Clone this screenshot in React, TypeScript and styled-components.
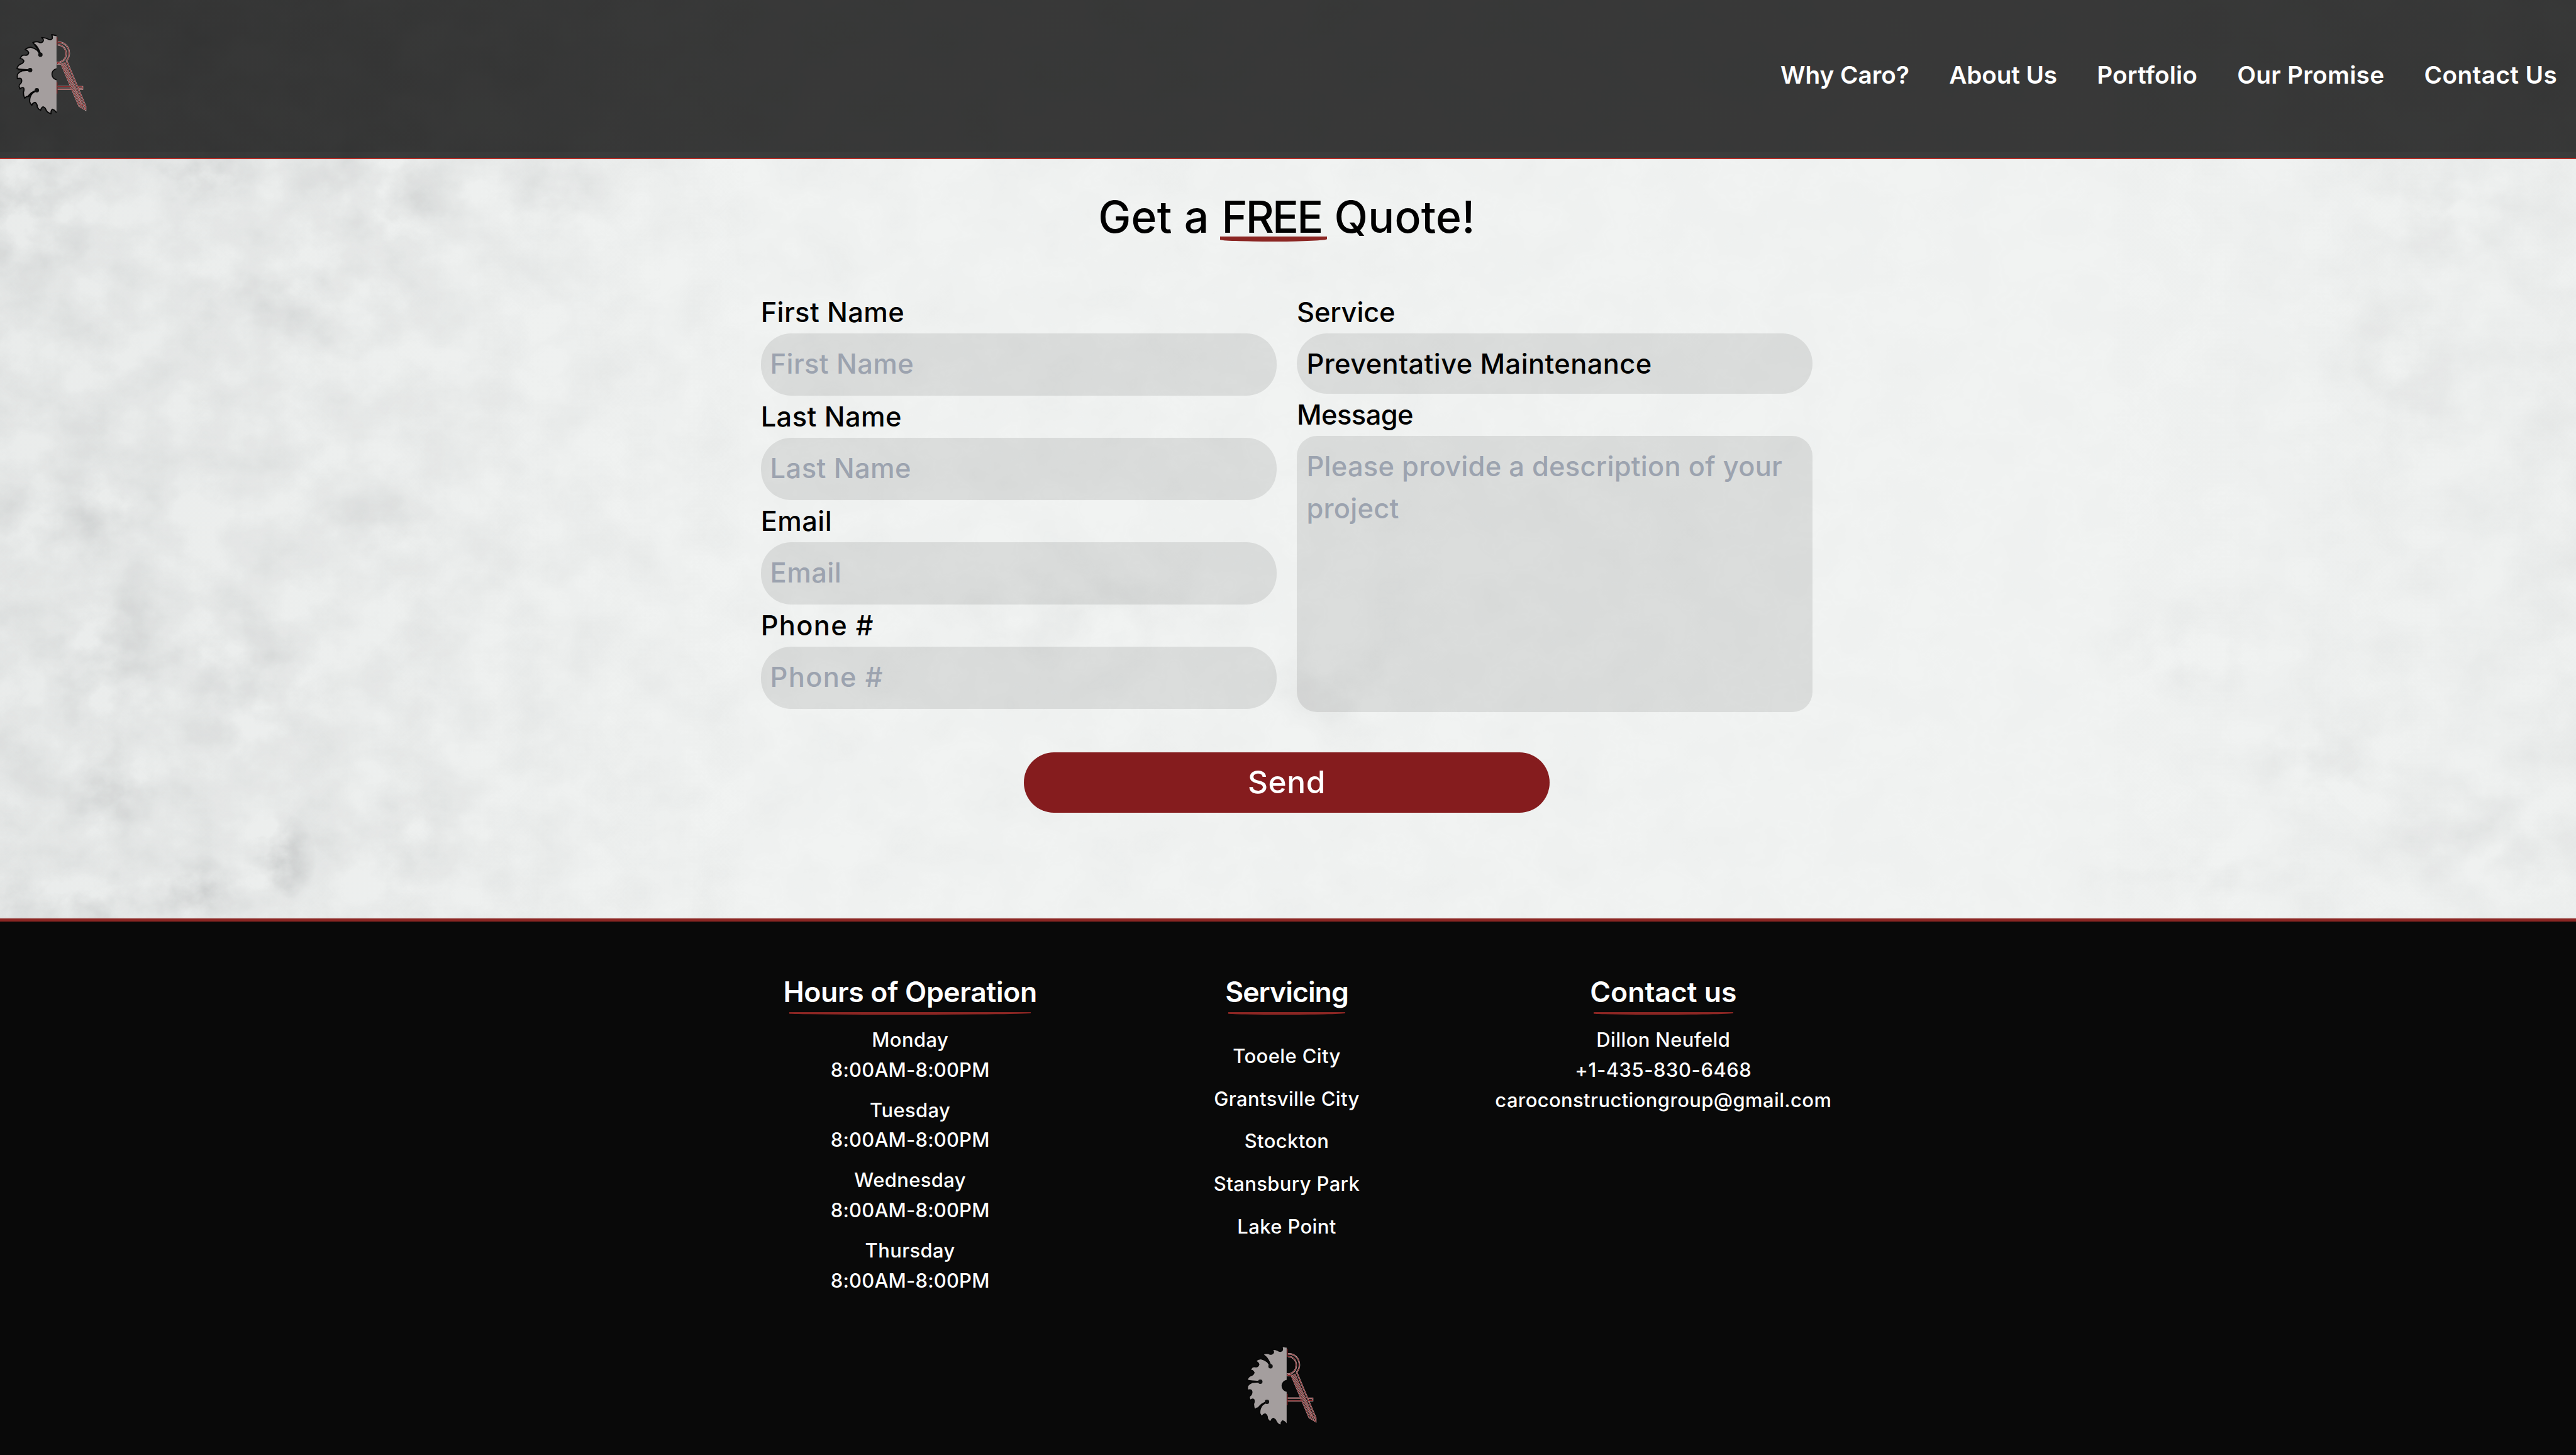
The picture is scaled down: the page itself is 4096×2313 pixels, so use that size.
import React from 'react';
import styled, { createGlobalStyle } from 'styled-components';

/* Design units: 32 units make one rem, and the root size sets the page scale. */
const u = (n: number) => `${n / 32}rem`;

const brick = '#8b2623';
const cream = '#f1f3f2';

const GlobalStyle = createGlobalStyle`
  *, *::before, *::after { box-sizing: border-box; }
  html { font-size: 31.9376px; }
  body {
    margin: 0;
    background: #090909;
    font-family: Inter, "Liberation Sans", sans-serif;
    font-weight: 500;
    overflow: hidden;
  }
  h1, h2, p, ul { margin: 0; padding: 0; }
`;

const Page = styled.div`
  position: relative;
  display: flex;
  flex-direction: column;
  height: ${u(2318)};
  background: ${cream};
  overflow: hidden;
`;

const TextureLayer = styled.svg`
  position: absolute;
  top: 0;
  left: 0;
  width: 100%;
  height: ${u(1469)};
`;

const Header = styled.header`
  position: relative;
  flex: none;
  display: flex;
  align-items: flex-start;
  justify-content: space-between;
  height: ${u(253)};
  padding: ${u(50)} ${u(30)} 0 ${u(20)};
  background: linear-gradient(rgba(0, 0, 0, 0.77) ${u(242)}, rgba(0, 0, 0, 0.752) ${u(242)});
  border-bottom: ${u(3)} solid #b02c26;
`;

const Nav = styled.nav`
  display: flex;
  gap: ${u(63.3)};
  padding-top: ${u(41)};
`;

const Spaced = styled.span<{ $track?: number }>`
  letter-spacing: ${p => p.$track ?? 0}em;
`;

const NavLink = styled(Spaced)`
  color: #fff;
  font-size: ${u(38.8)};
  line-height: ${u(56)};
  font-weight: 600;
  white-space: nowrap;
`;

const Main = styled.main`
  position: relative;
  flex: none;
  display: flex;
  flex-direction: column;
  align-items: center;
  height: ${u(1210)};
  padding: ${u(54)} ${u(4)} 0 0;
`;

const Title = styled.h1`
  display: flex;
  gap: ${u(20)};
  height: ${u(80)};
  color: #000;
  font-size: ${u(69.8)};
  line-height: ${u(80)};
  font-weight: 500;
  white-space: nowrap;
`;

const Emphasis = styled(Spaced)`
  position: relative;
  &::after {
    content: '';
    position: absolute;
    left: ${u(-2)};
    right: ${u(-9)};
    bottom: ${u(2)};
    height: ${u(8)};
    background: ${brick};
    border-bottom-left-radius: 50% ${u(3)};
    border-bottom-right-radius: 50% ${u(4)};
  }
`;

const Form = styled.form`
  display: flex;
  flex-direction: column;
  align-items: center;
  margin-top: ${u(76.6)};
`;

const Columns = styled.div`
  display: grid;
  grid-template-columns: ${u(822)} ${u(822)};
  gap: ${u(32)};
`;

const Column = styled.div`
  display: flex;
  flex-direction: column;
`;

const Label = styled.label<{ $track?: number }>`
  color: #000;
  font-size: ${u(43.5)};
  line-height: ${u(67.2)};
  letter-spacing: ${p => p.$track ?? 0.01}em;
`;

const controlStyles = `
  display: block;
  width: 100%;
  margin: 0;
  border: 0;
  outline: 0;
  appearance: none;
  background: rgba(0, 0, 0, 0.09);
  color: #000;
  font-family: inherit;
  font-weight: 500;
  font-size: ${u(43.5)};
  line-height: ${u(67.2)};
  &::placeholder { color: #9ca3af; opacity: 1; }
`;

const Input = styled.input<{ $track?: number }>`
  ${controlStyles}
  height: ${u(99.2)};
  padding: ${u(15)} ${u(15)} ${u(17)};
  border-radius: ${u(48)};
  letter-spacing: ${p => p.$track ?? 0.01}em;
`;

const Select = styled.select`
  ${controlStyles}
  height: ${u(96)};
  padding: ${u(15)} ${u(15.5)} ${u(13.8)};
  border-radius: ${u(48)};
  letter-spacing: 0.0096em;
`;

const TextArea = styled.textarea`
  ${controlStyles}
  height: ${u(440.5)};
  padding: ${u(15.5)} ${u(15.5)};
  border-radius: ${u(32)};
  letter-spacing: 0.0062em;
  resize: none;
  overflow: hidden;
`;

const SendButton = styled.button`
  width: ${u(838)};
  height: ${u(96)};
  margin-top: ${u(64)};
  padding: 0 0 ${u(3)};
  border: 0;
  border-radius: ${u(48)};
  background: #851c1e;
  color: #fff;
  font-family: inherit;
  font-weight: 500;
  font-size: ${u(49.7)};
  letter-spacing: 0.012em;
`;

const Footer = styled.footer`
  position: relative;
  flex: 1;
  display: flex;
  flex-direction: column;
  align-items: center;
  padding: ${u(82)} ${u(4)} 0 0;
  border-top: ${u(6)} solid ${brick};
  background: #090909;
  color: #fff;
`;

const FooterColumns = styled.div`
  display: grid;
  grid-template-columns: repeat(3, ${u(600)});
`;

const FooterColumn = styled.section`
  display: flex;
  flex-direction: column;
  align-items: center;
`;

const FooterHeading = styled.h2<{ $track?: number }>`
  display: flex;
  flex-direction: column;
  align-items: center;
  font-size: ${u(44.6)};
  line-height: ${u(62)};
  font-weight: 600;
  letter-spacing: ${p => p.$track ?? 0}em;
  white-space: nowrap;
  &::after {
    content: '';
    width: 95%;
    height: ${u(4)};
    background: ${brick};
    border-bottom-left-radius: 50% ${u(1.5)};
    border-bottom-right-radius: 50% ${u(2.5)};
  }
`;

const Entries = styled.div<{ $top: number; $gap: number }>`
  display: flex;
  flex-direction: column;
  align-items: center;
  padding-top: ${p => u(p.$top)};
  gap: ${p => u(p.$gap)};
`;

const Line = styled.p<{ $track?: number }>`
  font-size: ${u(31)};
  line-height: ${u(48)};
  letter-spacing: ${p => p.$track ?? 0.013}em;
  text-align: center;
  white-space: nowrap;
`;

const FooterLogo = styled.div`
  padding-right: ${u(16)};
  margin-top: ${u(75)};
`;

const LogoSvg = styled.svg`
  display: block;
  width: ${u(123.333)};
  height: ${u(136.667)};
`;

const SAW =
  'M270 170L247 165Q252 178 249 185Q245 192 234 189Q222 181 199 179Q209 186 207 195Q202 206 190 203Q178 195 157 203L168 216L182 236L193 261L178 240Q166 230 150 226Q134 224 120 237Q134 242 137 252Q134 263 124 264Q110 261 105 266Q99 272 96 279Q109 280 114 291Q111 302 98 306Q85 312 81 327L104 333L144 335L106 338Q88 345 83 357Q82 366 83 376Q95 371 102 377Q107 388 99 399Q91 404 91 412Q95 418 95 425Q105 414 113 420Q117 428 112 440Q111 456 118 469Q125 459 137 460L150 443L176 431L155 445Q139 464 142 487Q146 496 152 503Q157 490 168 489Q179 497 178 511Q183 522 194 527Q197 513 206 510Q218 514 220 526Q228 540 244 543Q242 529 250 522Q260 524 270 538';

function Logo() {
  return (
    <LogoSvg viewBox="60 150 370 410" fill="none" aria-label="Caro">
      <path d={`${SAW}V381A27 27 0 0 1 270 328V170Z`} fill="#a49e9e" />
      <path d={SAW} stroke="#070707" strokeWidth="5.5" strokeLinejoin="round" />
      <path
        d="M166 213Q182 227 192 256M84 331Q106 332 138 335M134 462Q148 442 170 434"
        stroke="#070707"
        strokeWidth="8"
      />
      <g fill="#111">
        <circle cx="193" cy="261" r="10.5" />
        <circle cx="144" cy="335" r="10.5" />
        <circle cx="176" cy="431" r="10.5" />
      </g>
      <path d="M270 381A27 27 0 0 1 270 328" stroke="#070707" strokeWidth="5" />
      {[
        { color: '#b9a3a3', width: 7 },
        { color: '#861719', width: 3 },
      ].map(({ color, width }) => (
        <g key={color} stroke={color} strokeWidth={width} strokeLinejoin="miter">
          <path d="M276 202C310 200 331 225 331 255C331 272 325 281 318 290L351 369L409 508V525L378 506L293 305H275V298H284C305 292 316 276 316 255C316 232 299 214 276 214" />
          <path d="M300 301L388 504M308 297L397 505M387 500L408 512" />
          <path d="M275 413.500H338M275 426H345M371 414H394V425H376" />
        </g>
      ))}
      <path d="M272.500 177V215M272.500 393V447" stroke="#8c2224" strokeWidth="4" />
    </LogoSvg>
  );
}

/* Worn patches of the wall: centre x, centre y, radius x, radius y, strength. */
const STAINS: [number, number, number, number, number][] = [
  [30, 320, 150, 130, 0.5],
  [330, 275, 110, 60, 0.5],
  [620, 310, 190, 120, 0.3],
  [880, 310, 100, 80, 0.3],
  [470, 470, 220, 120, 0.18],
  [130, 820, 170, 80, 0.25],
  [180, 1050, 120, 150, 0.3],
  [390, 1080, 130, 160, 0.22],
  [600, 830, 140, 60, 0.16],
  [180, 1260, 90, 90, 0.4],
  [445, 1370, 60, 80, 1],
  [320, 1420, 90, 60, 0.7],
  [120, 1440, 200, 70, 0.4],
  [640, 1340, 160, 90, 0.22],
  [1720, 980, 280, 90, 0.12],
  [2120, 1100, 130, 100, 0.14],
  [3900, 340, 160, 110, 0.2],
  [3830, 600, 140, 150, 0.16],
  [3480, 1040, 170, 90, 0.18],
  [3700, 1220, 170, 110, 0.18],
  [3950, 1330, 220, 110, 0.18],
  [3500, 1390, 260, 80, 0.12],
];

function ConcreteTexture() {
  return (
    <TextureLayer viewBox="0 0 4104 1469" preserveAspectRatio="none" aria-hidden>
      <defs>
        <filter id="grain" x="0" y="0" width="100%" height="100%" colorInterpolationFilters="sRGB">
          <feTurbulence type="fractalNoise" baseFrequency="0.011 0.013" numOctaves="5" seed="14" />
          <feColorMatrix values="0 0 0 0 0.42  0 0 0 0 0.43  0 0 0 0 0.44  1.5 0 0 0 -0.42" />
        </filter>
        <radialGradient id="stain">
          <stop offset="0" stopColor="#fff" stopOpacity="1" />
          <stop offset="0.5" stopColor="#fff" stopOpacity="0.5" />
          <stop offset="1" stopColor="#fff" stopOpacity="0" />
        </radialGradient>
        <linearGradient id="sides">
          <stop offset="0" stopColor="#fff" stopOpacity="0.14" />
          <stop offset="0.15" stopColor="#fff" stopOpacity="0.1" />
          <stop offset="0.3" stopColor="#fff" stopOpacity="0.04" />
          <stop offset="0.8" stopColor="#fff" stopOpacity="0.02" />
          <stop offset="1" stopColor="#fff" stopOpacity="0.07" />
        </linearGradient>
        <linearGradient id="wash">
          <stop offset="0" stopColor="#70777a" stopOpacity="0.06" />
          <stop offset="0.3" stopColor="#70777a" stopOpacity="0" />
          <stop offset="0.8" stopColor="#70777a" stopOpacity="0" />
          <stop offset="1" stopColor="#70777a" stopOpacity="0.02" />
        </linearGradient>
        <mask id="wear">
          <rect width="4104" height="1469" fill="url(#sides)" />
          {STAINS.map(([cx, cy, rx, ry, opacity]) => (
            <ellipse
              key={`${cx}-${cy}`}
              cx={cx}
              cy={cy}
              rx={rx}
              ry={ry}
              fill="url(#stain)"
              opacity={opacity * 0.55}
            />
          ))}
        </mask>
      </defs>
      <rect width="4104" height="1469" fill="url(#wash)" />
      <g mask="url(#wear)">
        <rect width="4104" height="1469" filter="url(#grain)" />
      </g>
    </TextureLayer>
  );
}

const NAV = [
  { label: 'Why Caro?', track: 0 },
  { label: 'About Us', track: -0.003 },
  { label: 'Portfolio', track: 0.004 },
  { label: 'Our Promise', track: 0.008 },
  { label: 'Contact Us', track: 0.01 },
];

const FIELDS = [
  { name: 'First Name', track: 0.009 },
  { name: 'Last Name', track: 0.01 },
  { name: 'Email', track: 0.01 },
  { name: 'Phone #', track: 0.03 },
];
const DAYS = ['Monday', 'Tuesday', 'Wednesday', 'Thursday'];
const CITIES = ['Tooele City', 'Grantsville City', 'Stockton', 'Stansbury Park', 'Lake Point'];

export default function App() {
  return (
    <>
      <GlobalStyle />
      <Page>
        <ConcreteTexture />
        <Header>
          <Logo />
          <Nav>
            {NAV.map(item => (
              <NavLink key={item.label} $track={item.track}>
                {item.label}
              </NavLink>
            ))}
          </Nav>
        </Header>
        <Main>
          <Title>
            <Spaced $track={0.004}>Get a</Spaced>
            <Emphasis $track={-0.04}>FREE</Emphasis>
            <Spaced $track={0.004}>Quote!</Spaced>
          </Title>
          <Form onSubmit={e => e.preventDefault()}>
            <Columns>
              <Column>
                {FIELDS.map(({ name, track }) => (
                  <React.Fragment key={name}>
                    <Label $track={track}>{name}</Label>
                    <Input placeholder={name} $track={track} />
                  </React.Fragment>
                ))}
              </Column>
              <Column>
                <Label $track={-0.003}>Service</Label>
                <Select defaultValue="Preventative Maintenance">
                  <option>Preventative Maintenance</option>
                </Select>
                <Label $track={-0.0126}>Message</Label>
                <TextArea placeholder="Please provide a description of your project" />
              </Column>
            </Columns>
            <SendButton type="submit">Send</SendButton>
          </Form>
        </Main>
        <Footer>
          <FooterColumns>
            <FooterColumn>
              <FooterHeading $track={-0.007}>Hours of Operation</FooterHeading>
              <Entries $top={16} $gap={16}>
                {DAYS.map(day => (
                  <div key={day}>
                    <Line>{day}</Line>
                    <Line $track={0.007}>8:00AM-8:00PM</Line>
                  </div>
                ))}
              </Entries>
            </FooterColumn>
            <FooterColumn>
              <FooterHeading $track={-0.021}>Servicing</FooterHeading>
              <Entries $top={42} $gap={20}>
                {CITIES.map(city => (
                  <Line key={city}>{city}</Line>
                ))}
              </Entries>
            </FooterColumn>
            <FooterColumn>
              <FooterHeading>Contact us</FooterHeading>
              <Entries $top={16} $gap={0}>
                <Line>Dillon Neufeld</Line>
                <Line $track={0.018}>+1-435-830-6468</Line>
                <Line>caroconstructiongroup@gmail.com</Line>
              </Entries>
            </FooterColumn>
          </FooterColumns>
          <FooterLogo>
            <Logo />
          </FooterLogo>
        </Footer>
      </Page>
    </>
  );
}
